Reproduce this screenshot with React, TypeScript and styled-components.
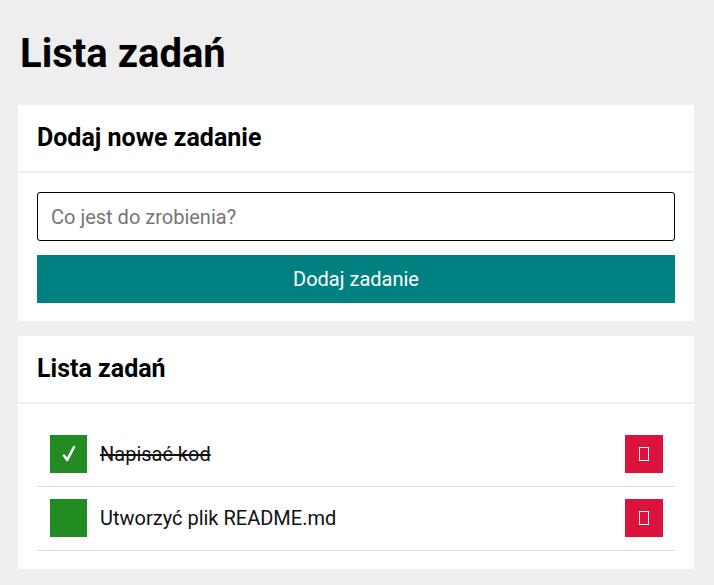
import React, { useState } from 'react';
import styled, { createGlobalStyle } from 'styled-components';

const GlobalStyle = createGlobalStyle`
  html, body {
    margin: 0;
    padding: 0;
    background-color: #eeeeee;
    font-family: Roboto, "Liberation Sans", Arial, sans-serif;
  }
  * {
    box-sizing: border-box;
  }
`;

const Page = styled.main`
  padding: 0 20px 18px 18px;
`;

const Title = styled.h1`
  margin: 29px 0 27px;
  padding-left: 2px;
  font-size: 40px;
  line-height: 49px;
  font-weight: 700;
  color: #000;
`;

const Card = styled.section`
  background-color: #fff;
  margin-bottom: 15px;
`;

const CardHeader = styled.header`
  padding: 19px;
  border-bottom: 2px solid #eeeeee;
`;

const CardTitle = styled.h2`
  margin: 0;
  font-size: 25px;
  line-height: 28px;
  font-weight: 700;
  color: #000;
`;

const CardBody = styled.div`
  padding: 19px 19px 18px;
`;

const TaskInput = styled.input`
  display: block;
  width: 100%;
  height: 49px;
  margin: 0 0 14px;
  padding: 0 13px;
  border: 1px solid #000;
  border-radius: 3px;
  font-family: inherit;
  font-size: 20px;
  color: #222;
  outline: none;

  &::placeholder {
    color: #757575;
  }
`;

const AddButton = styled.button`
  display: block;
  width: 100%;
  height: 48px;
  border: none;
  background-color: #008080;
  color: #fff;
  font-family: inherit;
  font-size: 20px;
  cursor: pointer;
`;

const TaskList = styled.ul`
  list-style: none;
  margin: 0;
  padding: 0;
`;

const TaskRow = styled.li`
  display: flex;
  align-items: center;
  gap: 13px;
  padding: 12px 12px 13px 13px;
  border-bottom: 1px solid #dddddd;
`;

const CheckBox = styled.button<{ done: boolean }>`
  width: 37px;
  height: 38px;
  flex-shrink: 0;
  border: none;
  padding: 0;
  background-color: #228b22;
  color: #fff;
  font-family: "DejaVu Sans", sans-serif;
  font-size: 22px;
  font-weight: 700;
  line-height: 38px;
  cursor: pointer;
`;

const TaskText = styled.span<{ done: boolean }>`
  flex: 1;
  font-size: 20px;
  color: #111;
  text-decoration: ${({ done }) => (done ? 'line-through' : 'none')};
`;

const DeleteButton = styled.button`
  width: 38px;
  height: 38px;
  flex-shrink: 0;
  display: flex;
  align-items: center;
  justify-content: center;
  border: none;
  padding: 0;
  background-color: #dc143c;
  cursor: pointer;
`;

// missing-glyph box, as the bin emoji shows up in the original
const Tofu = styled.span`
  display: block;
  width: 10px;
  height: 14px;
  border: 1px solid #fff;
`;

const CheckIcon = () => (
  <svg width="14" height="18" viewBox="0 0 14 18" style={{ display: 'block', margin: '0 auto' }}>
    <path d="M2 10.5 L5.2 15 L12 2" fill="none" stroke="#fff" strokeWidth="2.6" strokeLinecap="round" strokeLinejoin="round" />
  </svg>
);

const initialTasks = [
  { id: 1, text: 'Napisać kod', done: true },
  { id: 2, text: 'Utworzyć plik README.md', done: false },
];

const App: React.FC = () => {
  const [tasks, setTasks] = useState(initialTasks);
  const [value, setValue] = useState('');

  const addTask = () => {
    if (!value.trim()) return;
    setTasks([...tasks, { id: Date.now(), text: value.trim(), done: false }]);
    setValue('');
  };

  const toggle = (id: number) =>
    setTasks(tasks.map((t) => (t.id === id ? { ...t, done: !t.done } : t)));

  const remove = (id: number) => setTasks(tasks.filter((t) => t.id !== id));

  return (
    <>
      <GlobalStyle />
      <Page>
        <Title>Lista zadań</Title>
        <Card>
          <CardHeader>
            <CardTitle>Dodaj nowe zadanie</CardTitle>
          </CardHeader>
          <CardBody>
            <TaskInput
              placeholder="Co jest do zrobienia?"
              value={value}
              onChange={(e) => setValue(e.target.value)}
            />
            <AddButton onClick={addTask}>Dodaj zadanie</AddButton>
          </CardBody>
        </Card>
        <Card>
          <CardHeader>
            <CardTitle>Lista zadań</CardTitle>
          </CardHeader>
          <CardBody>
            <TaskList>
              {tasks.map((task) => (
                <TaskRow key={task.id}>
                  <CheckBox done={task.done} onClick={() => toggle(task.id)}>
                    {task.done ? <CheckIcon /> : null}
                  </CheckBox>
                  <TaskText done={task.done}>{task.text}</TaskText>
                  <DeleteButton onClick={() => remove(task.id)}>
                    <Tofu />
                  </DeleteButton>
                </TaskRow>
              ))}
            </TaskList>
          </CardBody>
        </Card>
      </Page>
    </>
  );
};

export default App;
